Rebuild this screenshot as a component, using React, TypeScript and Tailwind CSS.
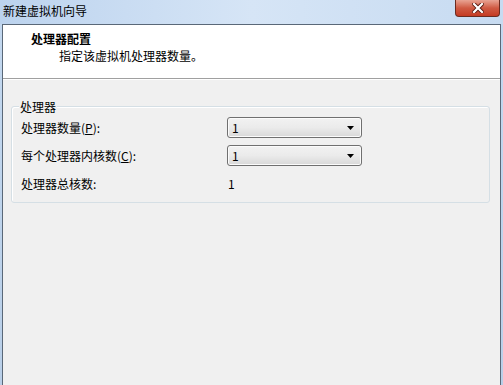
import React from "react";

const font = { fontFamily: '"Noto Sans CJK SC", "Liberation Sans", sans-serif' };

function Combo() {
  return (
    <div className="w-[135px] h-[21px] rounded-[3px] border border-[#707070] bg-gradient-to-b from-[#f2f2f2] via-[#ebebeb] to-[#d8d8d8] flex items-center justify-between pl-[4px] pr-[7px] shadow-[inset_0_0_0_1px_#fbfbfb]">
      <span className="text-[12px] leading-none text-black">1</span>
      <svg width="7" height="4" viewBox="0 0 7 4"><path d="M0 0 L7 0 L3.5 4 Z" fill="#000" /></svg>
    </div>
  );
}

export default function App() {
  return (
    <div style={font} className="w-[503px] h-[385px] overflow-hidden flex flex-col bg-gradient-to-b from-[#c4d9f0] to-[#b9cfe8] text-black">
      <div className="h-[24px] flex items-start justify-between bg-gradient-to-r from-[#bcd3ee] via-[#d6e5f6] to-[#c7dbf1]">
        <span className="pl-[3px] pt-[3px] text-[12px] leading-[16px] text-black">新建虚拟机向导</span>
        <div className="mr-[3px] w-[45px] h-[17px] rounded-b-[4px] border border-t-0 border-[#6b2b20] bg-gradient-to-b from-[#e8a393] via-[#cf5a43] to-[#c43a22] flex items-center justify-center">
          <svg width="12" height="10" viewBox="0 0 12 10">
            <path d="M2 1 L10 9 M10 1 L2 9" stroke="#5a1a10" strokeWidth="4" strokeLinecap="square" />
            <path d="M2 1 L10 9 M10 1 L2 9" stroke="#fff" strokeWidth="2.2" strokeLinecap="square" />
          </svg>
        </div>
      </div>
      <div className="flex-1 mx-[2px] border border-b-0 border-[#5a6878] bg-[#f0f0f0] flex flex-col">
        <div className="h-[54px] bg-white border-b border-[#a0a0a0] pl-[28px] pt-[6px]">
          <div className="text-[12px] leading-[16px] font-bold">处理器配置</div>
          <div className="text-[12px] leading-[16px] pl-[28px] pt-[1px]">指定该虚拟机处理器数量。</div>
        </div>
        <div className="border-t border-white" />
        <div className="relative mt-[26px] ml-[8px] mr-[10px] h-[97px] border border-[#d5dfe5] rounded-[3px] shadow-[inset_1px_1px_0_#fff]">
          <span className="absolute -top-[8px] left-[7px] bg-[#f0f0f0] px-[1px] text-[12px] leading-[16px]">处理器</span>
          <div className="pt-[10px] pl-[9px] flex flex-col">
            <div className="flex items-center h-[21px]">
              <span className="w-[206px] text-[12px] leading-[16px]">处理器数量(<span className="underline">P</span>):</span>
              <Combo />
            </div>
            <div className="flex items-center h-[21px] mt-[7px]">
              <span className="w-[206px] text-[12px] leading-[16px]">每个处理器内核数(<span className="underline">C</span>):</span>
              <Combo />
            </div>
            <div className="flex items-center mt-[10px]">
              <span className="w-[207px] text-[12px] leading-[16px]">处理器总核数:</span>
              <span className="text-[12px] leading-[16px]">1</span>
            </div>
          </div>
        </div>
      </div>
    </div>
  );
}
